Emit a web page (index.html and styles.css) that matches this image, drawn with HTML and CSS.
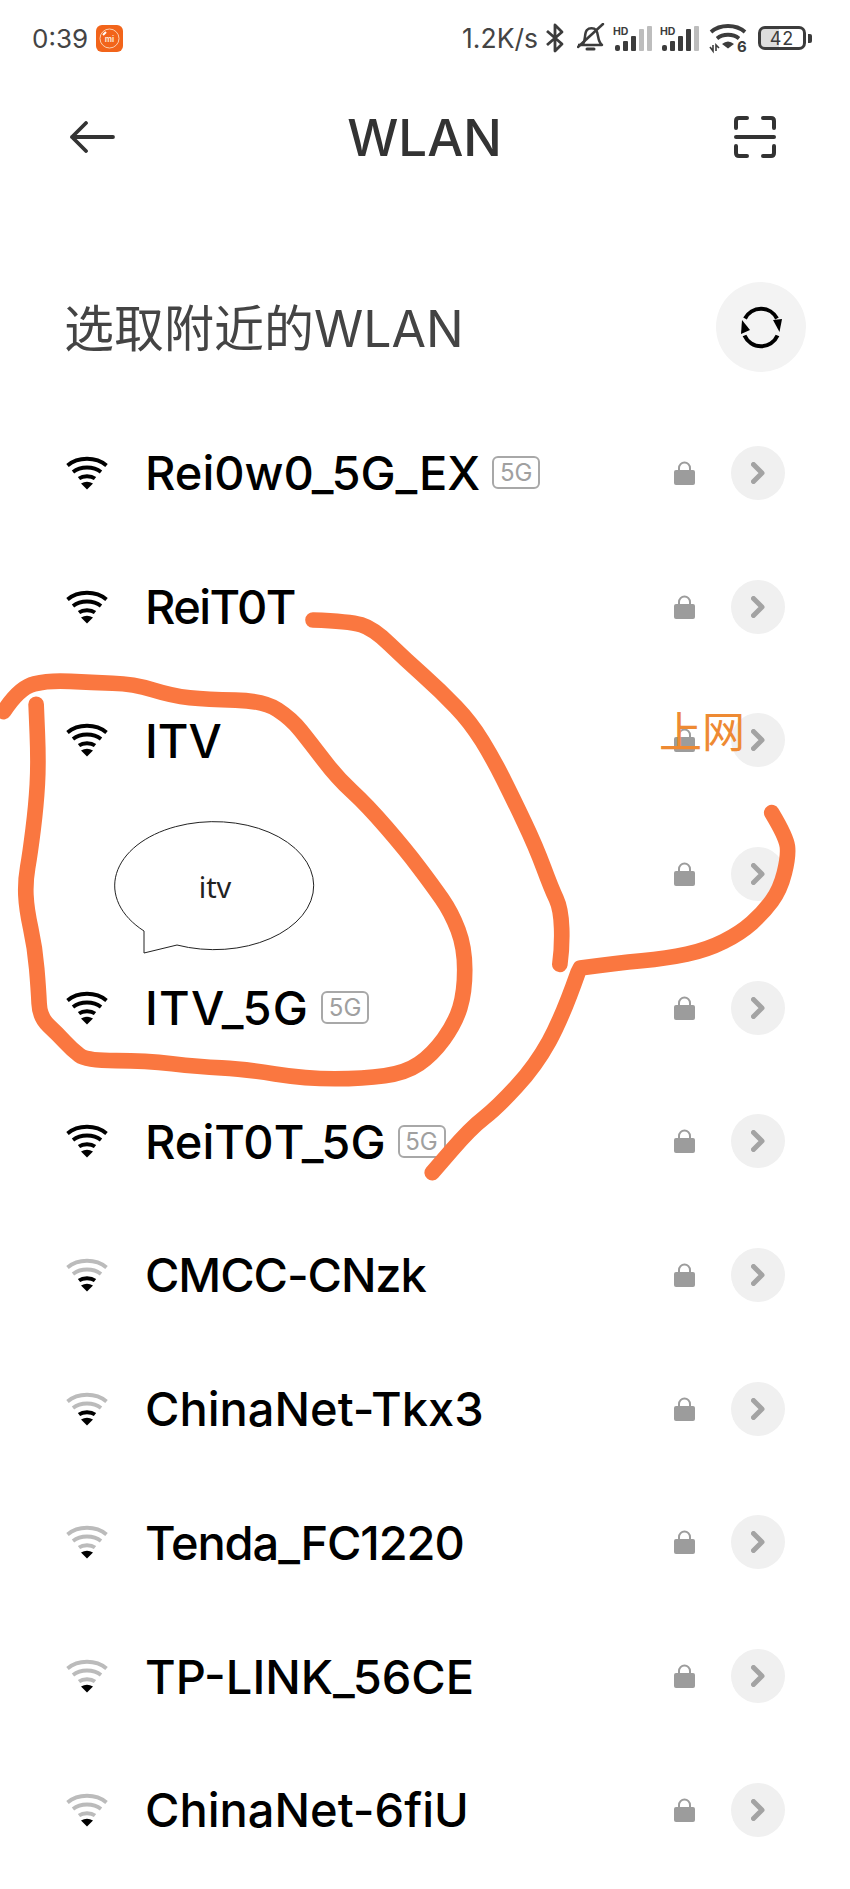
FILE: index.html
```html
<!DOCTYPE html>
<html lang="zh">
<head>
  <meta charset="utf-8">
  <title>WLAN</title>
  <meta name="viewport" content="width=device-width, initial-scale=1">
  <link rel="stylesheet" href="styles.css">
</head>
<body>
  <svg width="0" height="0" class="defs">
    <symbol id="arc1" viewBox="0 0 42 34"><path d="M1.500 9.500C12 0.500 30 0.500 40.500 9.500" /></symbol>
    <symbol id="arc2" viewBox="0 0 42 34"><path d="M7 16C14.500 10 27.500 10 35 16" /></symbol>
    <symbol id="arc3" viewBox="0 0 42 34"><path d="M13 22.500C17 19.500 25 19.500 29 22.500" /></symbol>
    <symbol id="dot" viewBox="0 0 42 34"><path d="M15 27.500Q21 24 27 27.500L21 33.500Z" /></symbol>
    <symbol id="lock" viewBox="0 0 21 24"><path d="M5 10V7a5.500 5.500 0 0 1 11 0v3" fill="none" stroke="#9c9c9c" stroke-width="2"/><rect x="0" y="9" width="21" height="15" rx="2" fill="#9c9c9c"/></symbol>
    <symbol id="chev" viewBox="0 0 14 22"><path d="M2.500 2.500L11 11L2.500 19.500" fill="none" stroke="#a3a3a3" stroke-width="5" stroke-linecap="round" stroke-linejoin="round"/></symbol>
  </svg>

  <div class="status">
    <div class="status-left">
      <span class="clock">0:39</span>
      <svg class="mi" viewBox="0 0 27 27">
        <rect width="27" height="27" rx="6" fill="#f2641a"/>
        <circle cx="13.500" cy="13.500" r="9.500" fill="none" stroke="#fbd0b0" stroke-width="1"/>
        <path d="M7 10L10 7" stroke="#fff" stroke-width="2"/>
        <text x="13.500" y="16.500" class="mi-text">mi</text>
      </svg>
    </div>
    <div class="status-right">
      <span class="speed">1.2K/s</span>
      <svg class="st-bt" viewBox="0 0 20 30"><path d="M2 8L17 21L10 28V2L17 9L2 22" fill="none" stroke="#3c3c3c" stroke-width="2.800" stroke-linejoin="round"/></svg>
      <svg class="st-bell" viewBox="0 0 28 30">
        <path d="M6 21C9 17 7 10 10 7C12 4.500 17 4.500 19 7C22 11 20 18 25 22H1" fill="none" stroke="#3c3c3c" stroke-width="2.500" stroke-linejoin="round"/>
        <path d="M10 26H17" stroke="#3c3c3c" stroke-width="3" stroke-linecap="round"/>
        <path d="M1 24L26 1" stroke="#3c3c3c" stroke-width="2.500" stroke-linecap="round"/>
      </svg>
      <svg class="st-sig" viewBox="0 0 39 28">
        <text x="0" y="11" class="hd">HD</text>
        <rect x="2" y="21" width="5" height="6" rx="2" fill="#3c3c3c"/>
        <rect x="10" y="17" width="5" height="10" rx="1" fill="#3c3c3c"/>
        <rect x="18" y="12" width="5" height="15" rx="1" fill="#3c3c3c"/>
        <rect x="26" y="5" width="5" height="22" rx="1" fill="#bdbdbd"/>
        <rect x="34" y="2" width="5" height="25" rx="1" fill="#bdbdbd"/>
      </svg>
      <svg class="st-sig" viewBox="0 0 39 28">
        <text x="0" y="11" class="hd">HD</text>
        <rect x="2" y="21" width="5" height="6" rx="2" fill="#3c3c3c"/>
        <rect x="10" y="17" width="5" height="10" rx="1" fill="#3c3c3c"/>
        <rect x="18" y="12" width="5" height="15" rx="1" fill="#3c3c3c"/>
        <rect x="26" y="5" width="5" height="22" rx="1" fill="#3c3c3c"/>
        <rect x="34" y="2" width="5" height="25" rx="1" fill="#bdbdbd"/>
      </svg>
      <svg class="st-wifi" viewBox="0 0 38 30">
        <path d="M2 9C11 1 27 1 36 9M8 15.500C14 10.500 24 10.500 30 15.500" fill="none" stroke="#3c3c3c" stroke-width="3.800"/>
        <path d="M13 21Q19 16 25 21L19 25.500Z" fill="#3c3c3c"/>
        <path d="M1 24L4 28V22M7 28V22L10 25" fill="none" stroke="#3c3c3c" stroke-width="1.600"/>
        <text x="28" y="28.500" class="six">6</text>
      </svg>
      <div class="battery">
        <div class="battery-body"><span class="battery-num">42</span></div>
        <div class="battery-tip"></div>
      </div>
    </div>
  </div>

  <div class="toolbar">
    <svg class="back" viewBox="0 0 46 32"><path d="M44 16H3M17 2L3 16L17 30" fill="none" stroke="#333" stroke-width="3.800" stroke-linecap="round" stroke-linejoin="round"/></svg>
    <h1 class="title">WLAN</h1>
    <svg class="scan" viewBox="0 0 42 42">
      <path d="M13 2H5Q2 2 2 5V12M29 2H37Q40 2 40 5V12M13 40H5Q2 40 2 37V30M29 40H37Q40 40 40 37V30" fill="none" stroke="#333" stroke-width="4" stroke-linecap="round"/>
      <path d="M2 21H40" stroke="#333" stroke-width="4" stroke-linecap="round"/>
    </svg>
  </div>

  <div class="section">
    <h2 class="section-title">选取附近的WLAN</h2>
    <div class="refresh">
      <svg viewBox="-1 -1 44 44" width="44" height="44">
        <path d="M5 12.500A18 18 0 0 1 37 12.500" fill="none" stroke="#000" stroke-width="4"/>
        <path d="M37.500 29.500A18 18 0 0 1 4.500 29.500" fill="none" stroke="#000" stroke-width="4"/>
        <path d="M33 14L42 13L39.500 26Z" fill="#000"/>
        <path d="M2 14L10 24L1 28Z" fill="#000"/>
      </svg>
    </div>
  </div>

  <ul class="list">
    <li class="net"><svg class="wifi"><use href="#arc1"/><use href="#arc2"/><use href="#arc3"/><use href="#dot" class="d"/></svg><span class="name">Rei0w0_5G_EX</span><span class="tag">5G</span><svg class="lock"><use href="#lock"/></svg><span class="more"><svg class="chev"><use href="#chev"/></svg></span></li>
    <li class="net"><svg class="wifi"><use href="#arc1"/><use href="#arc2"/><use href="#arc3"/><use href="#dot" class="d"/></svg><span class="name name-tighter">ReiT0T</span><svg class="lock"><use href="#lock"/></svg><span class="more"><svg class="chev"><use href="#chev"/></svg></span></li>
    <li class="net"><svg class="wifi"><use href="#arc1"/><use href="#arc2"/><use href="#arc3"/><use href="#dot" class="d"/></svg><span class="name">ITV</span><svg class="lock"><use href="#lock"/></svg><span class="more"><svg class="chev"><use href="#chev"/></svg></span></li>
    <li class="net"><svg class="lock"><use href="#lock"/></svg><span class="more"><svg class="chev"><use href="#chev"/></svg></span></li>
    <li class="net"><svg class="wifi"><use href="#arc1"/><use href="#arc2"/><use href="#arc3"/><use href="#dot" class="d"/></svg><span class="name name-wide">ITV_5G</span><span class="tag">5G</span><svg class="lock"><use href="#lock"/></svg><span class="more"><svg class="chev"><use href="#chev"/></svg></span></li>
    <li class="net"><svg class="wifi"><use href="#arc1"/><use href="#arc2"/><use href="#arc3"/><use href="#dot" class="d"/></svg><span class="name">ReiT0T_5G</span><span class="tag">5G</span><svg class="lock"><use href="#lock"/></svg><span class="more"><svg class="chev"><use href="#chev"/></svg></span></li>
    <li class="net"><svg class="wifi"><use href="#arc1" class="off"/><use href="#arc2" class="off"/><use href="#arc3"/><use href="#dot" class="d"/></svg><span class="name name-tight">CMCC-CNzk</span><svg class="lock"><use href="#lock"/></svg><span class="more"><svg class="chev"><use href="#chev"/></svg></span></li>
    <li class="net"><svg class="wifi"><use href="#arc1" class="off"/><use href="#arc2" class="off"/><use href="#arc3"/><use href="#dot" class="d"/></svg><span class="name">ChinaNet-Tkx3</span><svg class="lock"><use href="#lock"/></svg><span class="more"><svg class="chev"><use href="#chev"/></svg></span></li>
    <li class="net"><svg class="wifi"><use href="#arc1" class="off"/><use href="#arc2" class="off"/><use href="#arc3" class="off"/><use href="#dot" class="d"/></svg><span class="name name-tight">Tenda_FC1220</span><svg class="lock"><use href="#lock"/></svg><span class="more"><svg class="chev"><use href="#chev"/></svg></span></li>
    <li class="net"><svg class="wifi"><use href="#arc1" class="off"/><use href="#arc2" class="off"/><use href="#arc3" class="off"/><use href="#dot" class="d"/></svg><span class="name">TP-LINK_56CE</span><svg class="lock"><use href="#lock"/></svg><span class="more"><svg class="chev"><use href="#chev"/></svg></span></li>
    <li class="net"><svg class="wifi"><use href="#arc1" class="off"/><use href="#arc2" class="off"/><use href="#arc3" class="off"/><use href="#dot" class="d"/></svg><span class="name">ChinaNet-6fiU</span><svg class="lock"><use href="#lock"/></svg><span class="more"><svg class="chev"><use href="#chev"/></svg></span></li>
  </ul>

  <!-- hand drawn marks on top of the screenshot -->
  <div class="bubble">
    <svg class="bubble-shape" viewBox="0 0 200 132">
      <path d="M62 124L29 132L29 110A99.500 64 0 1 1 62 124Z" fill="#fff" stroke="#222" stroke-width="1"/>
    </svg>
    <span class="bubble-text">itv</span>
  </div>
  <span class="scribble-text">上网</span>
  <svg class="marks" viewBox="0 0 706 1569">
    <path d="M3 591Q16 571 28.500 568Q41 565 58.500 566Q76 567 93.500 567.500Q111 568 127 573Q143 578 157.500 579.500Q172 581 195.500 581.500Q219 582 230.500 589.500Q242 597 250 607Q258 617 269 631.500Q280 646 292.500 657.500Q305 669 321 687.500Q337 706 348 720.500Q359 735 367 746.500Q375 758 380.500 772.500Q386 787 386 805.500Q386 824 382 837Q378 850 368.500 863Q359 876 348 883.500Q337 891 319.500 893.500Q302 896 278 896Q254 896 228.500 892Q203 888 184 887Q165 886 143 883.500Q121 881 96.500 881Q72 881 66 876.500Q60 872 54 865.500Q48 859 40.500 852Q33 845 32.500 833.500Q32 822 30.500 804.500Q29 787 25.500 771Q22 755 21.500 743.500Q21 732 23 720.500Q25 709 27.500 689Q30 669 31 651.500Q32 634 31 609.500L30 585"/>
    <path d="M260 515Q290 516 300 519Q310 522 323.500 535Q337 548 351.500 561Q366 574 378.500 587Q391 600 400.500 615.500Q410 631 418 647Q426 663 435.500 683Q445 703 451.500 720.500Q458 738 462 746.500Q466 755 466.500 771Q467 787 465 801"/>
    <path d="M641 675Q653 695 654 703Q655 711 651.500 725Q648 739 641 748.500Q634 758 624.500 766.500Q615 775 601 782Q587 789 570.500 792.500Q554 796 533 798Q512 800 482 804L480 808Q467 845 456 865Q445 885 429 902.500Q413 920 402 928.500Q391 937 375 955.500L359 974"/>
  </svg>
</body>
</html>
```
FILE: styles.css
```css
* {
  box-sizing: border-box;
}

html, body {
  margin: 0;
  padding: 0;
}

body {
  width: 850px;
  height: 1889px;
  position: relative;
  overflow: hidden;
  background: #fff;
  font-family: "Inter", "Noto Sans CJK SC", sans-serif;
  color: #000;
}

.defs {
  position: absolute;
}

/* status bar */
.status {
  height: 76px;
  padding: 0 38px 0 32px;
  display: flex;
  align-items: center;
  justify-content: space-between;
  color: #444;
}

.status-left {
  display: flex;
  align-items: center;
  gap: 8px;
}

.clock {
  font-size: 26px;
}

.speed {
  font-size: 26.500px;
}

.mi {
  width: 27px;
  height: 27px;
}

.mi-text {
  font-size: 8px;
  font-weight: 700;
  fill: #fde3d0;
  text-anchor: middle;
}

.status-right {
  display: flex;
  align-items: center;
}

.st-bt {
  width: 20px;
  height: 30px;
  margin-left: 7px;
}

.st-bell {
  width: 28px;
  height: 30px;
  margin-left: 12px;
}

.st-sig {
  width: 39px;
  height: 28px;
  margin-left: 8px;
  overflow: visible;
}

.hd {
  font-size: 10.500px;
  font-weight: 700;
  fill: #3c3c3c;
}

.st-wifi {
  width: 38px;
  height: 30px;
  margin-left: 10px;
  overflow: visible;
}

.six {
  font-size: 15px;
  font-weight: 700;
  fill: #3c3c3c;
}

.battery {
  display: flex;
  align-items: center;
  margin-left: 11px;
  gap: 2px;
}

.battery-body {
  width: 48px;
  height: 24px;
  border: 3px solid #3c3c3c;
  border-radius: 7px;
  display: flex;
  align-items: center;
  justify-content: center;
  background: linear-gradient(90deg, #ddd 0, #ddd 42%, #fff 42%);
  background-clip: padding-box;
}

.battery-num {
  font-size: 18px;
  color: #3c3c3c;
  letter-spacing: 1px;
}

.battery-tip {
  width: 4px;
  height: 9px;
  background: #3c3c3c;
  border-radius: 0 2px 2px 0;
}

/* title */
.toolbar {
  height: 122px;
  padding: 0 74px 0 69px;
  display: flex;
  align-items: center;
  justify-content: space-between;
}

.back {
  width: 46px;
  height: 32px;
}

.scan {
  width: 42px;
  height: 42px;
}

.title {
  margin: 0;
  font-size: 51px;
  font-weight: 500;
  color: #333;
}

.section {
  height: 208px;
  padding: 50px 44px 0 64px;
  display: flex;
  align-items: center;
  justify-content: space-between;
}

.section-title {
  margin: 0 0 4px;
  font-size: 50px;
  font-weight: 400;
  color: #444;
}

.refresh {
  width: 90px;
  height: 90px;
  border-radius: 50%;
  background: #f3f3f3;
  display: flex;
  align-items: center;
  justify-content: center;
}

/* network rows */
.list {
  list-style: none;
  margin: 0;
  padding: 0;
}

.net {
  height: 133.7px;
  padding: 0 65px 0 66px;
  display: flex;
  align-items: center;
}

.wifi {
  width: 42px;
  height: 34px;
  margin-right: 37px;
}

.wifi use {
  fill: none;
  stroke: #000;
  stroke-width: 3.8;
}

.wifi use.off {
  stroke: #bbb;
}

.wifi use.d {
  fill: #000;
  stroke: none;
}

.name {
  font-size: 47px;
  font-weight: 500;
}

.name-tight {
  letter-spacing: -1.1px;
}

.name-tighter {
  letter-spacing: -1.6px;
}

.name-wide {
  letter-spacing: 1.2px;
}

.tag {
  margin-left: 12px;
  width: 48px;
  height: 33px;
  border: 2px solid #a8a8a8;
  border-radius: 6px;
  color: #a0a0a0;
  font-size: 24px;
  display: flex;
  align-items: center;
  justify-content: center;
}

.lock {
  width: 21px;
  height: 24px;
  margin-left: auto;
  margin-right: 36px;
}

.more {
  width: 54px;
  height: 54px;
  border-radius: 50%;
  background: #f0f0f0;
  display: flex;
  align-items: center;
  justify-content: center;
}

.chev {
  width: 14px;
  height: 22px;
}

/* marks */
.bubble {
  position: absolute;
  left: 115px;
  top: 821px;
  width: 200px;
  height: 132px;
}

.bubble-shape {
  width: 200px;
  height: 132px;
  overflow: visible;
}

.bubble-text {
  position: absolute;
  left: 0;
  right: 0;
  top: 46px;
  text-align: center;
  font-size: 29px;
  color: #222;
  font-family: "Noto Sans", sans-serif;
}

.scribble-text {
  position: absolute;
  left: 659px;
  top: 702px;
  font-size: 43px;
  line-height: 54px;
  color: #ee8a33;
  font-family: "Noto Sans CJK SC", sans-serif;
}

.marks {
  position: absolute;
  left: 0;
  top: 0;
  width: 850px;
  height: 1889px;
  fill: none;
  stroke: #fa7740;
  stroke-width: 13;
  stroke-linecap: round;
  stroke-linejoin: round;
  pointer-events: none;
}
```
